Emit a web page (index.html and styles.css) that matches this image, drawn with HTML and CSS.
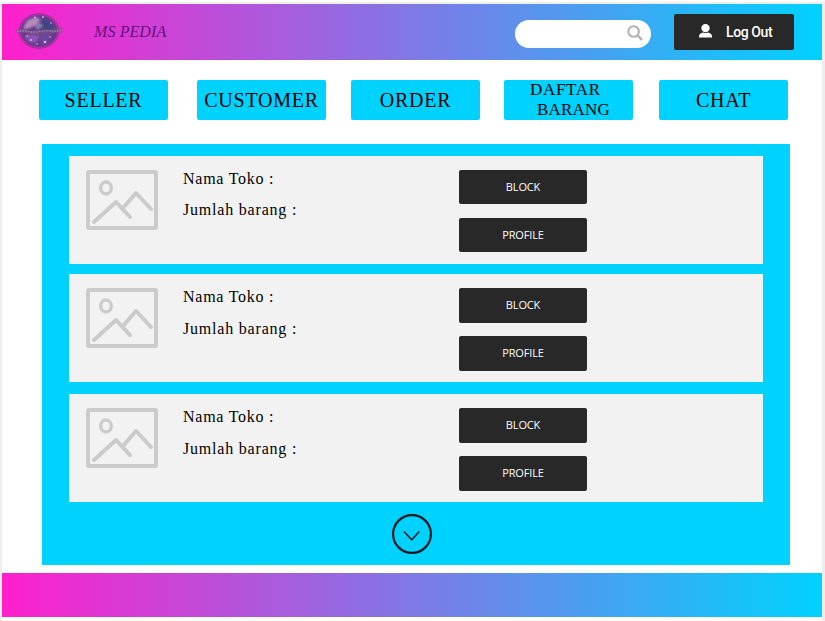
FILE: index.html
```html
<!DOCTYPE html>
<html lang="id">
<head>
<meta charset="utf-8">
<title>MS Pedia</title>
<link rel="stylesheet" href="styles.css">
</head>
<body>
<svg class="defs" width="0" height="0" aria-hidden="true">
  <symbol id="picture" viewBox="0 0 72 60">
    <g fill="none" stroke="#cbcbcb" stroke-width="4">
      <rect x="2" y="2" width="68" height="56" rx="1"/>
      <ellipse cx="20" cy="18" rx="5.3" ry="6" stroke-width="3.4"/>
      <path d="M8 52 30 32 44 47M37 38 50 23 65 39" stroke-linecap="round" stroke-linejoin="round" stroke-width="4"/>
    </g>
  </symbol>
</svg>
<div class="page">
  <header class="header">
    <svg class="logo" viewBox="0 0 50 38">
      <defs>
        <filter id="soft" x="-30%" y="-30%" width="160%" height="160%"><feGaussianBlur stdDeviation="1.2"/></filter>
      </defs>
      <ellipse cx="25" cy="19" rx="20" ry="17.3" fill="#c030b4" stroke="#8d2f8e" stroke-width=".8"/>
      <ellipse cx="25" cy="19" rx="18.3" ry="15.8" fill="#6a3a8c" stroke="#7c3b8c" stroke-width=".8"/>
      <g filter="url(#soft)">
        <path d="M10 14 14 8l8-3 5 3-5 5-6 3-6 2z" fill="#b48abb"/>
        <path d="m25 9 7-2 7 6 2 6-9 1-8-3z" fill="#454583"/>
        <path d="m21 13 5-2 3 3-6 4z" fill="#8b7fae"/>
        <path d="m10 24 8-2 8 2-4 7-7-1z" fill="#8b55b4"/>
        <path d="m26 22 12-1-3 8-7 4z" fill="#69479c"/>
      </g>
      <path d="M1 18q5-2 10-1 14 3 28 0 6-2 10-2l-1 3 1 3q-5-1-9 0-15 3-29 0-5-1-10 1l1-2z" fill="#7a5484" opacity=".6"/>
      <path d="M3 19.5q6-1.5 11 0t11 0 11-.5 11-1" stroke="#a590b5" stroke-width="1.8" stroke-dasharray="1.7 1" fill="none" opacity=".65"/>
      <g fill="#dcb0ec"><circle cx="17" cy="28" r="1"/><circle cx="23" cy="32" r=".8"/><circle cx="31" cy="30" r="1.3"/><circle cx="36" cy="25" r=".8"/><circle cx="21" cy="5.500" r=".9"/><circle cx="29" cy="5" r=".9"/><circle cx="37" cy="11" r=".8"/><circle cx="13" cy="24" r=".8"/></g>
    </svg>
    <span class="brand">MS PEDIA</span>
    <div class="search">
      <svg viewBox="0 0 16 16"><g fill="none" stroke="#b1b1b1" stroke-width="2"><circle cx="6.6" cy="6.5" r="5.3"/><path d="m10.5 10.4 4.5 4.5" stroke-width="2.4"/></g></svg>
    </div>
    <div class="logout">
      <svg viewBox="0 0 13 14"><path d="M6.5 0a4.200 4.100 0 0 1 4.200 4.100C10.700 6.500 8.800 8.300 6.500 8.300s-4.200-1.800-4.200-4.200A4.200 4.100 0 0 1 6.500 0zM0 13.500V12c0-2 2-3 4.200-3.500q2.300 1 4.600 0C11 9 13 10 13 12v1.500z" fill="#fff"/></svg>
      <span>Log Out</span>
    </div>
  </header>
  <nav class="nav">
    <a class="tab">SELLER</a>
    <a class="tab">CUSTOMER</a>
    <a class="tab">ORDER</a>
    <a class="tab tab-double"><span>DAFTAR</span><span class="second">BARANG</span></a>
    <a class="tab">CHAT</a>
  </nav>
  <main class="panel">
    <section class="card">
      <svg class="thumb"><use href="#picture"/></svg>
      <div class="info"><p>Nama Toko :</p><p class="amount">Jumlah barang :</p></div>
      <div class="actions"><div class="btn">BLOCK</div><div class="btn">PROFILE</div></div>
    </section>
    <section class="card tall">
      <svg class="thumb"><use href="#picture"/></svg>
      <div class="info"><p>Nama Toko :</p><p class="amount">Jumlah barang :</p></div>
      <div class="actions"><div class="btn">BLOCK</div><div class="btn">PROFILE</div></div>
    </section>
    <section class="card tall">
      <svg class="thumb"><use href="#picture"/></svg>
      <div class="info"><p>Nama Toko :</p><p class="amount">Jumlah barang :</p></div>
      <div class="actions"><div class="btn">BLOCK</div><div class="btn">PROFILE</div></div>
    </section>
    <svg class="more" viewBox="0 0 40 40"><g fill="none" stroke="#101820"><circle cx="20" cy="20" r="18.9" stroke-width="2.2"/><path d="m12 17.5 7.7 8.3 7.600-8.300" stroke-width="1.5"/></g></svg>
  </main>
  <footer class="footer"></footer>
</div>
</body>
</html>
```
FILE: styles.css
```css
* { box-sizing: border-box; }
body {
  margin: 0;
  height: 621px;
  padding: 4px 3px 0 2px;
  overflow: hidden;
  background: linear-gradient(#fff 2px, #eee 2px);
  font-family: "Liberation Serif", serif;
  color: #000;
}
.defs { display: block; }
.page { height: 617px; background: #fff; }
.header, .footer { background: linear-gradient(90deg, #ff1fcb, #00d2ff); }
.header { height: 56px; display: flex; align-items: flex-start; }
.logo { width: 50px; height: 38px; margin: 8px 0 0 12px; }
.brand {
  width: 421px;
  margin: 18px 0 0 30px;
  font-size: 16px;
  line-height: 20px;
  font-style: italic;
  letter-spacing: .1px;
  color: #65107e;
}
.search {
  width: 136px;
  height: 28px;
  margin-top: 16px;
  padding: 5px 8px 0 0;
  border-radius: 14px;
  background: #fff;
  display: flex;
  justify-content: flex-end;
}
.search svg { width: 16px; height: 16px; }
.logout {
  width: 120px;
  height: 36px;
  margin: 10px 0 0 23px;
  padding-left: 25px;
  border-radius: 2px;
  background: #282828;
  color: #fff;
  display: flex;
  align-items: center;
  gap: 14px;
  font: 500 14px/34px Roboto, sans-serif;
  letter-spacing: -.4px;
}
.logout svg { width: 13px; height: 14px; margin-bottom: 2px; }
.logout span { margin-bottom: 1px; white-space: nowrap; }
.nav {
  margin: 20px 34px 0 37px;
  display: grid;
  grid-template-columns: 158px 154px 153px 155px 129px;
}
.tab {
  width: 129px;
  height: 40px;
  border-radius: 2px;
  background: #00d2ff;
  display: flex;
  align-items: center;
  justify-content: center;
  font-size: 20px;
  letter-spacing: .75px;
}
.tab-double {
  flex-direction: column;
  align-items: flex-start;
  padding-left: 26px;
  font-size: 17px;
  line-height: 20px;
  letter-spacing: .2px;
}
.tab-double span:first-child { letter-spacing: .7px; }
.second { margin-left: 7px; }
.panel {
  width: 748px;
  height: 421px;
  margin: 24px 0 0 40px;
  padding: 12px 27px 0;
  background: #00d2ff;
  display: flex;
  flex-direction: column;
}
.card {
  height: 108px;
  margin-bottom: 10px;
  padding: 14px 0 0 17px;
  background: #f2f2f2;
  display: flex;
  align-items: flex-start;
}
.card:nth-child(2) { margin-bottom: 12px; }
.thumb { width: 72px; height: 60px; }
.info { width: 276px; margin: -1px 0 0 25px; }
.info p { margin: 0 0 11px; font-size: 16px; line-height: 20px; letter-spacing: .75px; }
.tall .info p { margin-bottom: 12px; }
.info .amount { letter-spacing: .8px; }
.actions { display: grid; gap: 14px; }
.btn {
  width: 128px;
  height: 34px;
  border-radius: 2px;
  background: #282828;
  color: #fff;
  text-align: center;
  font: 11px/34px "Open Sans", sans-serif;
  letter-spacing: -.15px;
}
.tall .actions { gap: 13px; }
.tall .btn { height: 35px; }
.more { width: 40px; height: 40px; margin: 2px 0 0 323px; }
.footer { height: 44px; margin-top: 8px; }
```
